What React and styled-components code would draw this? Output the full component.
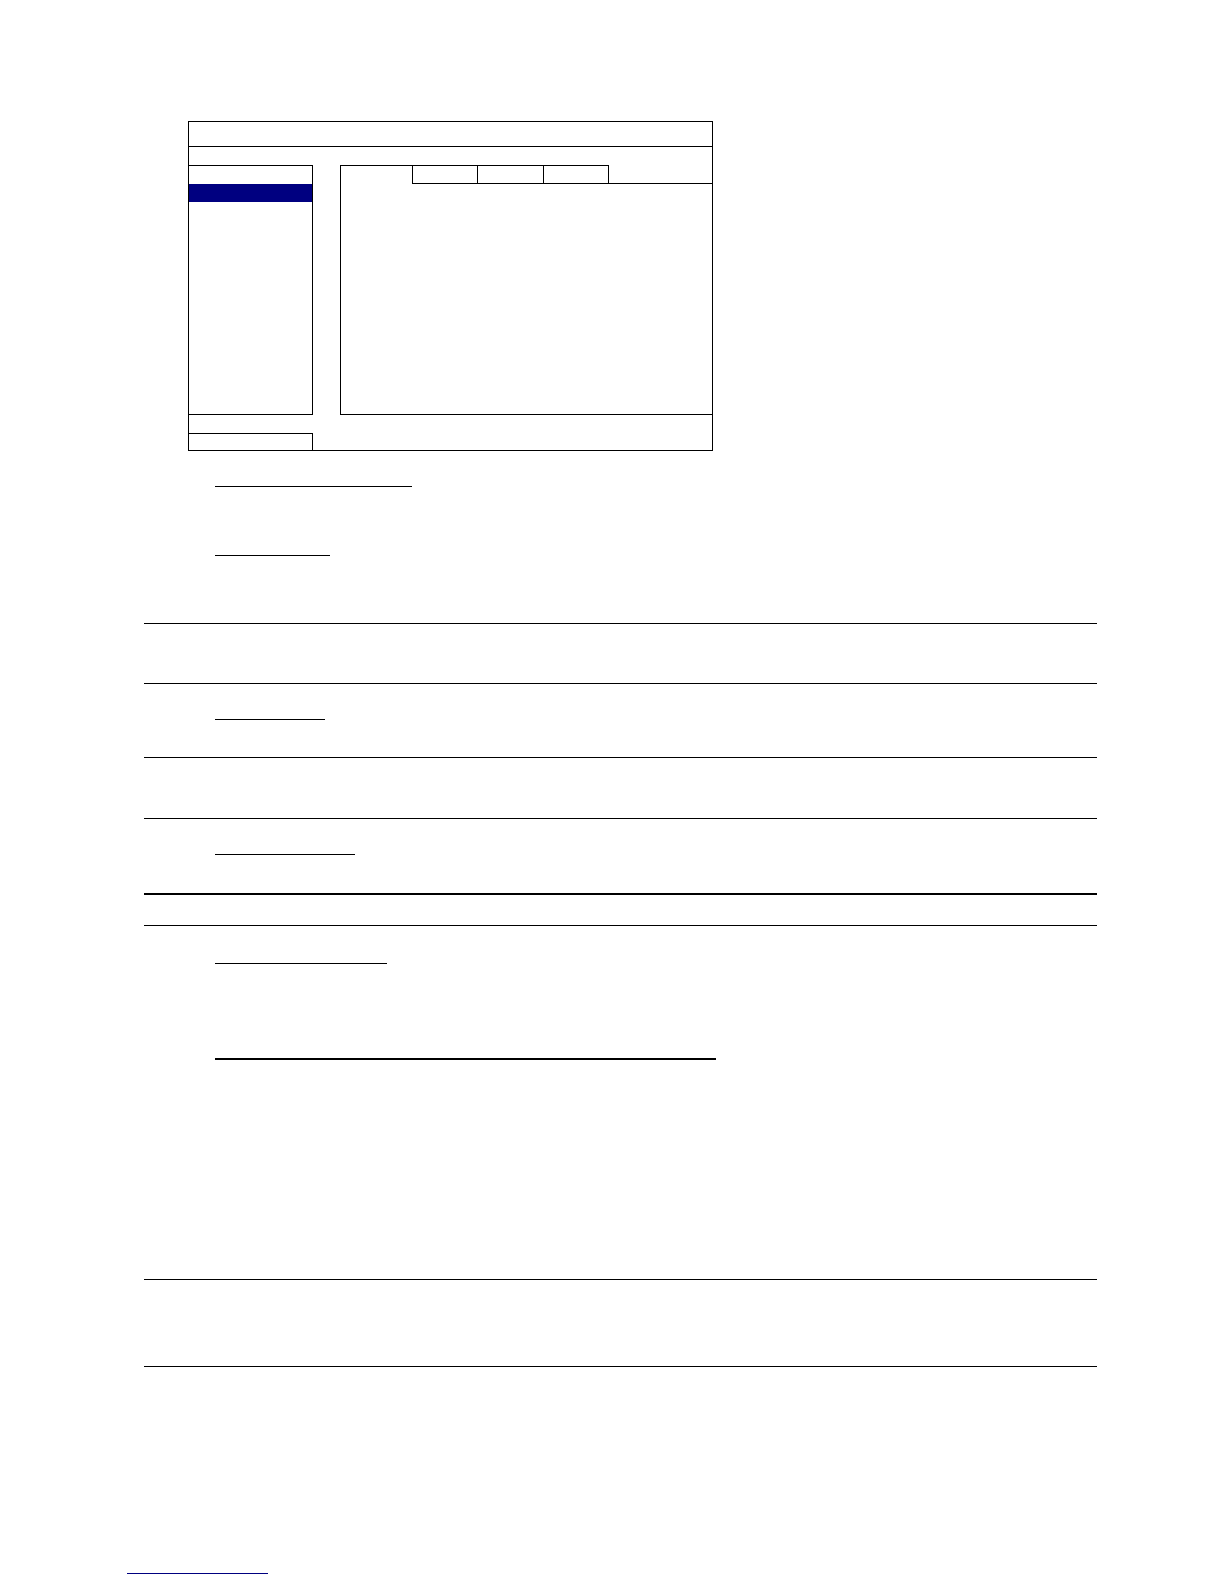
import React from "react";
import styled, { createGlobalStyle } from "styled-components";

const Global = createGlobalStyle`
  html, body { margin: 0; padding: 0; background: #ffffff; }
  body { font-family: "Liberation Sans", Arial, sans-serif; }
  * { box-sizing: border-box; }
`;

const Page = styled.div`
  width: 1224px;
  min-height: 1584px;
  display: flex;
  flex-direction: column;
  background: #fff;
`;

/* ---------- dialog figure ---------- */
const Dialog = styled.div`
  margin-top: 121px;
  margin-left: 188px;
  width: 525px;
  height: 330px;
  border: 1px solid #000;
  display: flex;
  flex-direction: column;
`;

const TitleBar = styled.div`
  height: 25px;
  border-bottom: 1px solid #000;
  flex: none;
`;

const Body = styled.div`
  margin-top: 18px;
  display: flex;
  align-items: stretch;
  gap: 27px;
  height: 250px;
  flex: none;
`;

const MenuPanel = styled.div`
  width: 124px;
  border-top: 1px solid #000;
  border-right: 1px solid #000;
  border-bottom: 1px solid #000;
  display: flex;
  flex-direction: column;
`;

const MenuItem = styled.div`
  height: 18px;
  background: ${(p) => (p.$selected ? "#000080" : "transparent")};
`;

const SettingsPanel = styled.div`
  flex: 1;
  border-left: 1px solid #000;
  border-bottom: 1px solid #000;
  display: flex;
  flex-direction: column;
`;

const TabStrip = styled.div`
  display: flex;
  height: 19px;
  flex: none;
`;

const ActiveTab = styled.div`
  width: 71px;
  border-top: 1px solid #000;
`;

const Tab = styled.div`
  width: ${(p) => p.$w}px;
  border-top: 1px solid #000;
  border-bottom: 1px solid #000;
  border-right: 1px solid #000;
  border-left: ${(p) => (p.$first ? "1px solid #000" : "none")};
`;

const TabFiller = styled.div`
  flex: 1;
  border-bottom: 1px solid #000;
`;

const TabContent = styled.div`
  flex: 1;
`;

const Footer = styled.div`
  margin-top: 18px;
  flex: 1;
  display: flex;
`;

const FooterBox = styled.div`
  width: 124px;
  border-top: 1px solid #000;
  border-right: 1px solid #000;
`;

/* ---------- document rules ---------- */
const Doc = styled.div`
  display: flex;
  flex-direction: column;
  margin-left: 144px;
  width: 953px;
`;

const Heading = styled.div`
  margin-top: ${(p) => p.$gap}px;
  margin-left: 71px;
  width: ${(p) => p.$w}px;
  border-bottom: ${(p) => p.$weight || 1}px solid #000;
`;

const Rule = styled.hr`
  margin: ${(p) => p.$gap}px 0 0 0;
  width: 100%;
  border: none;
  border-top: ${(p) => p.$weight || 1}px solid #000;
  height: 0;
`;

const PageFooter = styled.div`
  display: flex;
  margin-left: 127px;
`;

const Link = styled.a`
  margin-top: 206px;
  width: 141px;
  border-bottom: 1px solid #000080;
  color: #000080;
  display: block;
`;

const tabs = [66, 66, 65];

export default function App() {
  return (
    <>
      <Global />
      <Page>
        <Dialog>
          <TitleBar />
          <Body>
            <MenuPanel>
              <MenuItem />
              <MenuItem $selected />
            </MenuPanel>
            <SettingsPanel>
              <TabStrip>
                <ActiveTab />
                {tabs.map((w, i) => (
                  <Tab key={i} $w={w} $first={i === 0} />
                ))}
                <TabFiller />
              </TabStrip>
              <TabContent />
            </SettingsPanel>
          </Body>
          <Footer>
            <FooterBox />
          </Footer>
        </Dialog>

        <Doc>
          <Heading $gap={35} $w={197} />
          <Heading $gap={68} $w={115} />
          <Rule $gap={67} />
          <Rule $gap={59} />
          <Heading $gap={35} $w={110} />
          <Rule $gap={37} />
          <Rule $gap={60} />
          <Heading $gap={35} $w={140} />
          <Rule $gap={38} $weight={2} />
          <Rule $gap={30} />
          <Heading $gap={37} $w={172} />
          <Heading $gap={94} $w={501} $weight={2} />
          <Rule $gap={219} />
          <Rule $gap={86} />
        </Doc>

        <PageFooter>
          <Link />
        </PageFooter>
      </Page>
    </>
  );
}
